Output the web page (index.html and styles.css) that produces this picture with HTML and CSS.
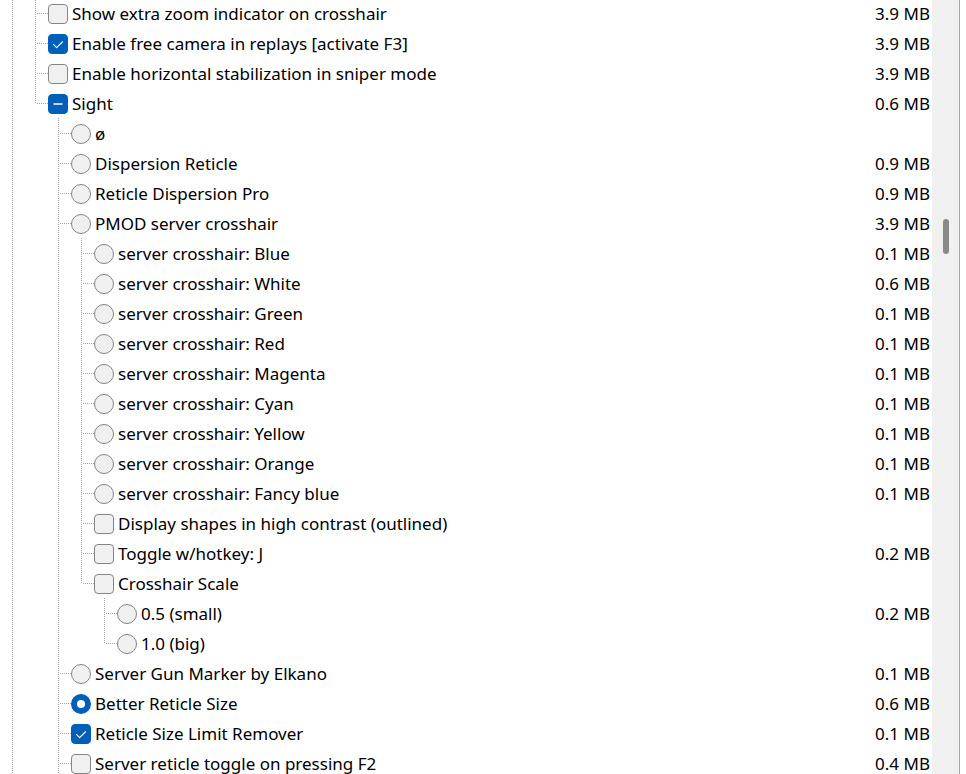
FILE: index.html
```html
<!DOCTYPE html>
<html>
<head>
<meta charset="utf-8">
<link rel="stylesheet" href="styles.css">
</head>
<body>
<div class="window">
  <div class="tree">
    <div class="row"><span class="g line"></span><span class="elbow tee"></span><span class="cb"></span><span class="label">Show extra zoom indicator on crosshair</span><span class="size">3.9 MB</span></div>
    <div class="row"><span class="g line"></span><span class="elbow tee"></span><span class="cb checked"><svg viewBox="0 0 20 20"><polyline points="5,10.5 8.5,14 15,7.5"/></svg></span><span class="label">Enable free camera in replays [activate F3]</span><span class="size">3.9 MB</span></div>
    <div class="row"><span class="g line"></span><span class="elbow tee"></span><span class="cb"></span><span class="label">Enable horizontal stabilization in sniper mode</span><span class="size">3.9 MB</span></div>
    <div class="row"><span class="g line"></span><span class="elbow end"></span><span class="cb mixed"><svg viewBox="0 0 20 20"><line x1="5" y1="10" x2="15" y2="10"/></svg></span><span class="label">Sight</span><span class="size">0.6 MB</span></div>

    <div class="row"><span class="g line"></span><span class="g"></span><span class="elbow tee"></span><span class="rb"></span><span class="label">ø</span><span class="size"></span></div>
    <div class="row"><span class="g line"></span><span class="g"></span><span class="elbow tee"></span><span class="rb"></span><span class="label">Dispersion Reticle</span><span class="size">0.9 MB</span></div>
    <div class="row"><span class="g line"></span><span class="g"></span><span class="elbow tee"></span><span class="rb"></span><span class="label">Reticle Dispersion Pro</span><span class="size">0.9 MB</span></div>
    <div class="row"><span class="g line"></span><span class="g"></span><span class="elbow tee"></span><span class="rb"></span><span class="label">PMOD server crosshair</span><span class="size">3.9 MB</span></div>

    <div class="row"><span class="g line"></span><span class="g"></span><span class="g line"></span><span class="elbow tee"></span><span class="rb"></span><span class="label">server crosshair: Blue</span><span class="size">0.1 MB</span></div>
    <div class="row"><span class="g line"></span><span class="g"></span><span class="g line"></span><span class="elbow tee"></span><span class="rb"></span><span class="label">server crosshair: White</span><span class="size">0.6 MB</span></div>
    <div class="row"><span class="g line"></span><span class="g"></span><span class="g line"></span><span class="elbow tee"></span><span class="rb"></span><span class="label">server crosshair: Green</span><span class="size">0.1 MB</span></div>
    <div class="row"><span class="g line"></span><span class="g"></span><span class="g line"></span><span class="elbow tee"></span><span class="rb"></span><span class="label">server crosshair: Red</span><span class="size">0.1 MB</span></div>
    <div class="row"><span class="g line"></span><span class="g"></span><span class="g line"></span><span class="elbow tee"></span><span class="rb"></span><span class="label">server crosshair: Magenta</span><span class="size">0.1 MB</span></div>
    <div class="row"><span class="g line"></span><span class="g"></span><span class="g line"></span><span class="elbow tee"></span><span class="rb"></span><span class="label">server crosshair: Cyan</span><span class="size">0.1 MB</span></div>
    <div class="row"><span class="g line"></span><span class="g"></span><span class="g line"></span><span class="elbow tee"></span><span class="rb"></span><span class="label">server crosshair: Yellow</span><span class="size">0.1 MB</span></div>
    <div class="row"><span class="g line"></span><span class="g"></span><span class="g line"></span><span class="elbow tee"></span><span class="rb"></span><span class="label">server crosshair: Orange</span><span class="size">0.1 MB</span></div>
    <div class="row"><span class="g line"></span><span class="g"></span><span class="g line"></span><span class="elbow tee"></span><span class="rb"></span><span class="label">server crosshair: Fancy blue</span><span class="size">0.1 MB</span></div>
    <div class="row"><span class="g line"></span><span class="g"></span><span class="g line"></span><span class="elbow tee"></span><span class="cb"></span><span class="label">Display shapes in high contrast (outlined)</span><span class="size"></span></div>
    <div class="row"><span class="g line"></span><span class="g"></span><span class="g line"></span><span class="elbow tee"></span><span class="cb"></span><span class="label">Toggle w/hotkey: J</span><span class="size">0.2 MB</span></div>
    <div class="row"><span class="g line"></span><span class="g"></span><span class="g line"></span><span class="elbow end"></span><span class="cb"></span><span class="label">Crosshair Scale</span><span class="size"></span></div>

    <div class="row"><span class="g line"></span><span class="g"></span><span class="g line"></span><span class="g"></span><span class="elbow tee"></span><span class="rb"></span><span class="label">0.5 (small)</span><span class="size">0.2 MB</span></div>
    <div class="row"><span class="g line"></span><span class="g"></span><span class="g line"></span><span class="g"></span><span class="elbow end"></span><span class="rb"></span><span class="label">1.0 (big)</span><span class="size"></span></div>

    <div class="row"><span class="g line"></span><span class="g"></span><span class="elbow tee"></span><span class="rb"></span><span class="label">Server Gun Marker by Elkano</span><span class="size">0.1 MB</span></div>
    <div class="row"><span class="g line"></span><span class="g"></span><span class="elbow tee"></span><span class="rb selected"></span><span class="label">Better Reticle Size</span><span class="size">0.6 MB</span></div>
    <div class="row"><span class="g line"></span><span class="g"></span><span class="elbow tee"></span><span class="cb checked"><svg viewBox="0 0 20 20"><polyline points="5,10.5 8.5,14 15,7.5"/></svg></span><span class="label">Reticle Size Limit Remover</span><span class="size">0.1 MB</span></div>
    <div class="row"><span class="g line"></span><span class="g"></span><span class="elbow tee"></span><span class="cb"></span><span class="label">Server reticle toggle on pressing F2</span><span class="size">0.4 MB</span></div>
  </div>
  <div class="scrollbar"><div class="thumb"></div></div>
  <div class="edge"></div>
</div>
</body>
</html>
```

FILE: styles.css
```css
html, body {
  margin: 0;
  padding: 0;
  background: #ffffff;
  overflow: hidden;
}
.window {
  display: flex;
  width: 966px;
  height: 774px;
  overflow: hidden;
  font-family: "Noto Sans", "Open Sans", sans-serif;
  font-size: 17px;
  color: #000;
}
.tree {
  width: 932px;
  flex: none;
  margin-top: -2px;
}
.row {
  display: flex;
  align-items: center;
  height: 30px;
  padding-left: 12px;
  padding-right: 2px;
}
.g {
  flex: none;
  width: 23px;
  height: 30px;
}
.g.line {
  background: repeating-linear-gradient(to bottom, #a3a3a3 0 1px, transparent 1px 2px) 0 0 / 1px 100% no-repeat;
}
.elbow {
  flex: none;
  width: 13px;
  height: 30px;
}
.elbow.tee {
  background:
    repeating-linear-gradient(to bottom, #a3a3a3 0 1px, transparent 1px 2px) 0 0 / 1px 100% no-repeat,
    repeating-linear-gradient(to right, #a3a3a3 0 1px, transparent 1px 2px) 2px 15px / 11px 1px no-repeat;
}
.elbow.end {
  background:
    repeating-linear-gradient(to bottom, #a3a3a3 0 1px, transparent 1px 2px) 0 0 / 1px 16px no-repeat,
    repeating-linear-gradient(to right, #a3a3a3 0 1px, transparent 1px 2px) 2px 15px / 11px 1px no-repeat;
}
.cb, .rb {
  flex: none;
  box-sizing: border-box;
  width: 20px;
  height: 20px;
  border: 1px solid #858585;
  background: #f0f0f0;
  margin-right: 4px;
  margin-top: 1px;
}
.cb {
  border-radius: 4px;
}
.rb {
  border-radius: 50%;
}
.cb svg {
  display: block;
  width: 18px;
  height: 18px;
  margin: 0;
}
.cb.checked, .cb.mixed {
  background: #005fb8;
  border-color: #005fb8;
}
.cb.checked svg polyline {
  fill: none;
  stroke: #ffffff;
  stroke-width: 1.2;
  stroke-linecap: round;
  stroke-linejoin: round;
}
.cb.mixed svg line {
  stroke: #d8e6f5;
  stroke-width: 2;
}
.rb.selected {
  background: #ffffff;
  border: 6px solid #005fb8;
}
.label {
  flex: none;
  white-space: nowrap;
  line-height: 29px;
  padding-top: 1px;
}
.size {
  margin-left: auto;
  white-space: nowrap;
  line-height: 29px;
  padding-top: 1px;
}
.scrollbar {
  flex: none;
  width: 27px;
  height: 774px;
  background: #f0f0f0;
  box-sizing: border-box;
  padding-top: 219px;
  padding-left: 11px;
}
.thumb {
  width: 6px;
  height: 35px;
  border-radius: 3px;
  background: #898989;
}
.edge {
  flex: none;
  width: 1px;
  height: 774px;
  background: #a9a9a9;
}
```
